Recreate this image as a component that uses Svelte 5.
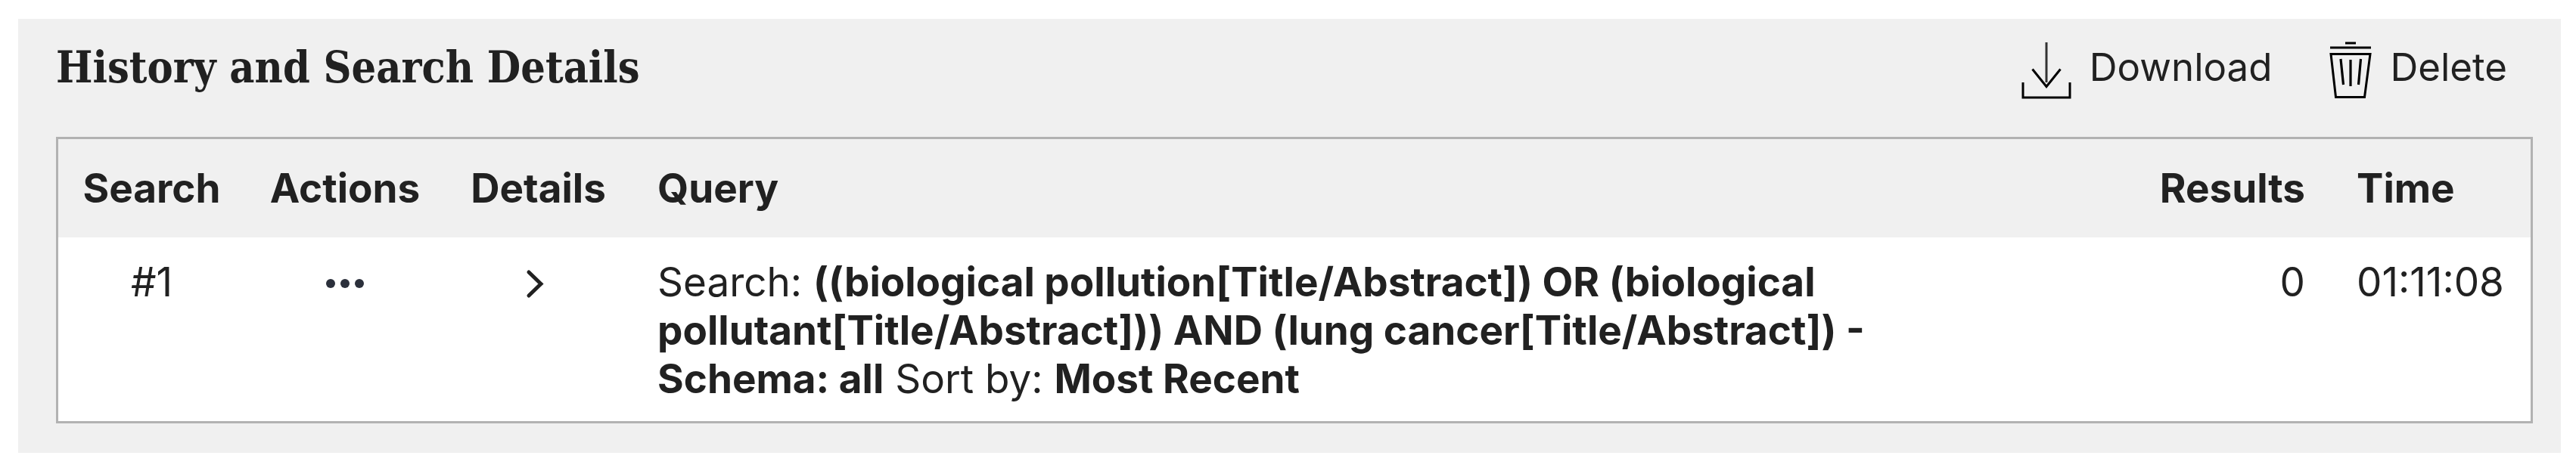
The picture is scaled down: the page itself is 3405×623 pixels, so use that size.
<script>
  const rows = [
    {
      id: '#1',
      query: '((biological pollution[Title/Abstract]) OR (biological pollutant[Title/Abstract])) AND (lung cancer[Title/Abstract]) - Schema: all',
      sort: 'Most Recent',
      results: 0,
      time: '01:11:08'
    }
  ];
</script>

<section class="history" aria-labelledby="history-title">
  <header class="bar">
    <h2 id="history-title">History and Search Details</h2>
    <div class="tools">
      <button type="button" class="tool">
        <svg width="66" height="76" viewBox="0 0 66 76" fill="none" stroke="#000" stroke-width="3" aria-hidden="true">
          <path d="M33 1V54" stroke="#333" />
          <path d="M14.500 36.500L33 59.500L51.500 36.500M2 54V74H64V54" />
        </svg>
        <span>Download</span>
      </button>
      <button type="button" class="tool">
        <svg width="56" height="76" viewBox="0 0 56 76" fill="none" stroke="#000" stroke-width="3" aria-hidden="true">
          <path d="M21 2H35M1 8H55" />
          <path d="M2 16.500H54L46.500 73.500H8.500Z" />
          <path d="M15 23L18.500 57M28 24V59M41.500 23L38.500 57" stroke-width="3.200" />
        </svg>
        <span>Delete</span>
      </button>
    </div>
  </header>

  <table>
    <colgroup>
      <col class="c-search" />
      <col class="c-actions" />
      <col class="c-details" />
      <col />
      <col class="c-results" />
      <col class="c-time" />
    </colgroup>
    <thead>
      <tr>
        <th scope="col" class="mid">Search</th>
        <th scope="col" class="mid">Actions</th>
        <th scope="col" class="mid">Details</th>
        <th scope="col">Query</th>
        <th scope="col" class="end">Results</th>
        <th scope="col">Time</th>
      </tr>
    </thead>
    <tbody>
      {#each rows as row}
        <tr>
          <td class="mid">{row.id}</td>
          <td class="mid">
            <button type="button" class="cell" aria-label="Actions">
              <svg width="52" height="64" viewBox="0 0 52 64" fill="#2b303b" aria-hidden="true">
                <circle cx="7" cy="34" r="6" />
                <circle cx="26" cy="34" r="6" />
                <circle cx="45" cy="34" r="6" />
              </svg>
            </button>
          </td>
          <td class="mid">
            <button type="button" class="cell" aria-label="Details">
              <svg width="36" height="64" viewBox="0 0 36 64" fill="none" stroke="#212121" stroke-width="5" stroke-linecap="round" aria-hidden="true">
                <path d="M5 19L21 34.500L5 50" />
              </svg>
            </button>
          </td>
          <td><p>Search: <b>{row.query}</b> Sort by: <b>{row.sort}</b></p></td>
          <td class="end">{row.results}</td>
          <td>{row.time}</td>
        </tr>
      {/each}
    </tbody>
  </table>
</section>

<style>
  :global(body) {
    margin: 0;
    background: #fff;
  }
  .history {
    margin: 25px 20px 24px 24px;
    padding: 30px 37px 39px 50px;
    background: #f0f0f0;
    color: #212121;
    font: 400 53px/64px Inter, "Liberation Sans", sans-serif;
  }
  .bar {
    display: flex;
    justify-content: space-between;
    align-items: flex-start;
    margin-bottom: 50px;
  }
  h2 {
    margin: 0;
    font: 700 57px/68px "DejaVu Serif Condensed", "DejaVu Serif", serif;
  }
  .tools {
    display: flex;
    gap: 76px;
    padding-right: 34px;
    font-size: 51px;
  }
  button {
    margin: 0;
    padding: 0;
    border: 0;
    background: none;
    color: inherit;
    font: inherit;
    cursor: pointer;
  }
  .tool {
    display: flex;
    align-items: flex-start;
    gap: 24px;
  }
  .tool span {
    padding-top: 2px;
  }
  svg {
    display: block;
    flex: none;
  }
  .cell {
    display: inline-block;
    vertical-align: top;
  }
  table {
    width: 100%;
    table-layout: fixed;
    border-collapse: separate;
    border-spacing: 0;
    border: 3px solid #b2b2b2;
    background: #fff;
  }
  .c-search,
  .c-details {
    width: 247px;
  }
  .c-actions,
  .c-results,
  .c-time {
    width: 264px;
  }
  th,
  td {
    padding: 27px 34px 24px;
    text-align: left;
    vertical-align: top;
    white-space: nowrap;
  }
  th {
    padding-block: 33px;
    background: #f0f0f0;
    font-weight: 700;
  }
  .mid {
    padding-inline: 0;
    text-align: center;
  }
  .end {
    text-align: right;
  }
  p {
    max-width: 1640px;
    margin: 0;
    white-space: normal;
  }
  b {
    font-weight: 700;
  }
</style>
